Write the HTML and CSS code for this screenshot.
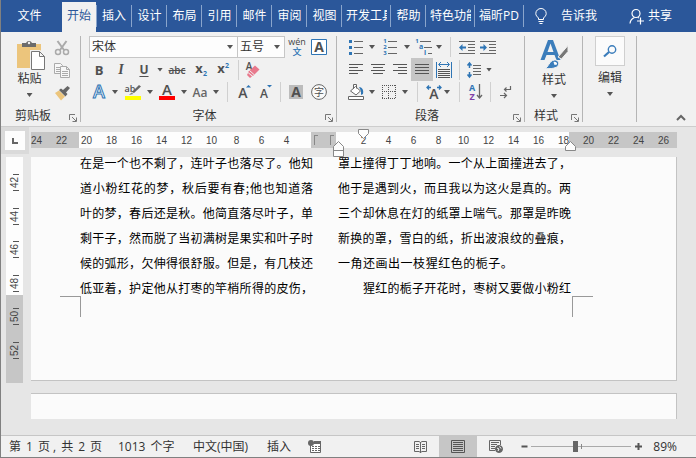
FILE: index.html
```html
<!DOCTYPE html>
<html lang="zh-CN">
<head>
<meta charset="utf-8">
<title>文档</title>
<link rel="stylesheet" href="styles.css">
</head>
<body>
<div class="window">
  <nav class="tabs">
    <a class="tab file" href="#">文件</a>
    <a class="tab active" href="#">开始</a>
    <a class="tab" href="#">插入</a>
    <a class="tab" href="#">设计</a>
    <a class="tab" href="#">布局</a>
    <a class="tab" href="#">引用</a>
    <a class="tab" href="#">邮件</a>
    <a class="tab" href="#">审阅</a>
    <a class="tab" href="#">视图</a>
    <a class="tab wide" href="#"><span>开发工具</span></a>
    <a class="tab" href="#">帮助</a>
    <a class="tab wide" href="#"><span>特色功能</span></a>
    <a class="tab wide" href="#"><span>福昕PD</span></a>
    <a class="tell" href="#">
      <svg width="12" height="17" viewBox="0 0 12 17" fill="none" stroke="#fff"><path d="M3.500 11.500V10C2 8.500 .8 7.500 .8 5.500a5.200 5 0 0 1 10.400 0c0 2-1.200 3-2.700 4.500v1.500zM3.500 13.500h5M4.500 15.500h3"/></svg>
      告诉我</a>
    <a class="share" href="#">
      <svg width="16" height="17" viewBox="0 0 16 17" fill="none" stroke="#fff" stroke-width="1.200"><circle cx="7" cy="5.500" r="4"/><path d="M1 15.500c.3-3.500 2-5 4.500-6M9 9.500l1 .5M11.500 9.500v7M8 13h7"/></svg>
      共享</a>
  </nav>

  <div class="ribbon">
    <section class="group clipboard">
      <div class="paste-area">
        <button class="big" aria-label="粘贴">
          <svg width="30" height="31" viewBox="0 0 30 31"><path fill="#ecc57c" d="M2 4h24v24H2z"/><path fill="#6b6b6b" d="M7 3h4a3.200 3.200 0 0 1 6 0h4v4H7z"/><circle cx="14" cy="3" r="1.200" fill="#f1f1f1"/><path fill="#fff" stroke="#f1f1f1" stroke-width="3" d="M16.500 11.500h8l5 5V29h-13z"/><path fill="#fff" stroke="#777" d="M16.500 11.500h8l5 5V29.500h-13zM24.500 11.500v5h5"/></svg>
          <span>粘贴</span><i class="caret"></i>
        </button>
        <div class="stack">
          <button aria-label="剪切"><svg width="16" height="16" viewBox="0 0 16 16" fill="none" stroke="#aaa" stroke-width="1.500"><path stroke-width="2" d="M3.500 1l6.500 9M12.500 1L6 10"/><circle cx="4" cy="12" r="2.500"/><circle cx="12" cy="12" r="2.500"/></svg></button>
          <button aria-label="复制"><svg width="16" height="15" viewBox="0 0 16 15" fill="#f7f7f7" stroke="#aaa"><path d="M.5.5h6l2 2v8h-8zM2 4.500h4M2 6.500h4M2 8.500h4"/><path d="M6.500 3.500h6l3 3v8h-9zM12.500 3.500v3h3M8 8.500h6M8 10.500h6M8 12.500h6"/></svg></button>
          <button aria-label="格式刷"><svg width="16" height="15" viewBox="0 0 16 15"><path fill="#ecc57c" d="M1 7l4-2.500 6 6L7 14.500z"/><path fill="#666" d="M5 4l2-1.500 2 1.500 4.500-4L16 2l-4 4.500 1.500 1.500-2 2.500z"/></svg></button>
        </div>
      </div>
      <div class="caption"><span>剪贴板</span><button class="launch" aria-label="剪贴板选项"><svg width="8" height="8" viewBox="0 0 8 8" fill="none" stroke="#777"><path d="M.5 6V.5H6M3 3l4 4M7.500 3.500v4h-4"/></svg></button></div>
    </section>

    <section class="group font">
      <div class="row combos">
        <label class="combo name"><select aria-label="字体"><option>宋体</option></select><i class="caret"></i></label>
        <label class="combo size"><select aria-label="字号"><option>五号</option></select><i class="caret"></i></label>
        <button class="w24 pinyin" aria-label="拼音指南"><span>wén</span><b>文</b></button>
        <button class="w20" aria-label="字符边框"><svg width="16" height="16" viewBox="0 0 16 16"><path fill="#fff" stroke="#2e75b5" d="M.5.5h15v15H.5z"/><text x="8" y="13" class="glyph" font-size="14">A</text></svg></button>
      </div>
      <div class="row">
        <button class="w22 bold">B</button><button class="w22 italic">I</button><button class="w24 under">U</button><i class="caret c8"></i>
        <button class="w26 strike">abc</button>
        <button class="w22" aria-label="下标"><svg width="16" height="16" viewBox="0 0 16 16"><text x="6" y="11" class="glyph" font-size="13">x</text><text x="12" y="14" class="glyph blue" font-size="7">2</text></svg></button>
        <button class="w22" aria-label="上标"><svg width="16" height="16" viewBox="0 0 16 16"><text x="6" y="11" class="glyph" font-size="13">x</text><text x="12" y="6" class="glyph blue" font-size="7">2</text></svg></button>
        <i class="sep s8"></i>
        <button class="w22" aria-label="清除格式"><svg width="16" height="16" viewBox="0 0 16 16"><text x="4" y="8" class="glyph thin" font-size="10">A</text><path fill="#e8788c" d="M10 3.500l4.500 4L8 14l-5-4z"/><path stroke="#f1f1f1" d="M4.500 8.500l5 4.500"/><path fill="#e8788c" d="M3 11l4 3.500-2 1.500-3-3z"/></svg></button>
      </div>
      <div class="row">
        <button class="w22" aria-label="文本效果"><svg width="16" height="16" viewBox="0 0 16 16"><text x="8" y="14" class="glyph effect" font-size="18">A</text></svg></button><i class="caret c10"></i>
        <button class="w26" aria-label="突出显示"><svg width="16" height="16" viewBox="0 0 16 16"><text x="5" y="8" class="glyph thin" font-size="9">ab</text><path fill="#666" d="M14 1l2 1.500L9 9 7 8z"/><path fill="#888" d="M6.500 8.500L8.500 10 4 11z"/><path fill="#ff0" d="M0 12h16v4H0z"/></svg></button><i class="caret c8"></i>
        <button class="w26" aria-label="字体颜色"><svg width="16" height="16" viewBox="0 0 16 16"><text x="8" y="11" class="glyph thin" font-size="15">A</text><path fill="red" d="M0 12h16v4H0z"/></svg></button><i class="caret c8"></i>
        <button class="w24 case">Aa</button><i class="caret c8"></i>
        <i class="sep s14"></i>
        <button class="w22" aria-label="增大字号"><svg width="16" height="16" viewBox="0 0 16 16"><text x="6" y="14" class="glyph thin" font-size="14">A</text><path fill="#2e75b5" d="M9 3.500L11.500 1 14 3.500z"/></svg></button>
        <button class="w20" aria-label="减小字号"><svg width="16" height="16" viewBox="0 0 16 16"><text x="6" y="14" class="glyph thin" font-size="12">A</text><path fill="#2e75b5" d="M9 1h5l-2.500 2.500z"/></svg></button>
        <i class="sep s8"></i>
        <button class="w24" aria-label="字符底纹"><svg width="14" height="14" viewBox="0 0 14 14"><path fill="#bcbcbc" d="M0 0h14v14H0z"/><text x="7" y="12" class="glyph" font-size="14">A</text></svg></button>
        <button class="w22" aria-label="带圈字符"><svg width="16" height="16" viewBox="0 0 16 16"><circle cx="8" cy="8" r="7.400" fill="#fafafa" stroke="#666"/><text x="8" y="12" class="glyph ring" font-size="10">字</text></svg></button>
      </div>
      <div class="caption"><span>字体</span><button class="launch" aria-label="字体选项"><svg width="8" height="8" viewBox="0 0 8 8" fill="none" stroke="#777"><path d="M.5 6V.5H6M3 3l4 4M7.500 3.500v4h-4"/></svg></button></div>
    </section>

    <section class="group para">
      <div class="row">
        <button class="w22" aria-label="项目符号"><svg width="14" height="16" viewBox="0 0 14 16"><path stroke="#666" d="M5 2.500h9M5 8.500h9M5 14.500h9"/><path fill="#2e75b5" d="M0 1h3v3H0zM0 7h3v3H0zM0 13h3v3H0z"/></svg></button><i class="caret c10"></i>
        <button class="w26" aria-label="编号"><svg width="14" height="16" viewBox="0 0 14 16"><path stroke="#666" d="M5 2.500h9M5 8.500h9M5 14.500h9"/><text x="2" y="4" class="glyph blue" font-size="6">1</text><text x="2" y="10" class="glyph blue" font-size="6">2</text><text x="2" y="16" class="glyph blue" font-size="6">3</text></svg></button><i class="caret c8"></i>
        <button class="w24" aria-label="多级列表"><svg width="17" height="16" viewBox="0 0 17 16"><path stroke="#666" d="M5 2.500h11M9 8.500h8M13 14.500h4"/><text x="2" y="4" class="glyph blue" font-size="6">1</text><text x="6" y="10" class="glyph blue" font-size="7">a</text><text x="10" y="16" class="glyph blue" font-size="7">i</text></svg></button><i class="caret c8"></i>
        <i class="sep s14"></i>
        <button class="w20" aria-label="减少缩进"><svg width="16" height="13" viewBox="0 0 16 13"><path stroke="#666" d="M0 .5h16M9 3.500h7M9 6.500h7M9 9.500h7M0 12.500h16"/><path fill="#2e75b5" d="M0 6.500L3.500 3v2.500H7v2H3.500V10z"/></svg></button>
        <button class="w22" aria-label="增加缩进"><svg width="16" height="13" viewBox="0 0 16 13"><path stroke="#666" d="M0 .5h16M9 3.500h7M9 6.500h7M9 9.500h7M0 12.500h16"/><path fill="#2e75b5" d="M7 6.500L3.500 3v2.500H0v2h3.500V10z"/></svg></button>
      </div>
      <div class="row">
        <button class="w22" aria-label="左对齐"><svg width="14" height="11" viewBox="0 0 14 11" stroke="#555"><path d="M0 .5h14M0 3.500h9M0 6.500h14M0 9.500h9"/></svg></button>
        <button class="w22" aria-label="居中"><svg width="14" height="11" viewBox="0 0 14 11" stroke="#555"><path d="M0 .5h14M2 3.500h10M0 6.500h14M2 9.500h10"/></svg></button>
        <button class="w22" aria-label="右对齐"><svg width="14" height="11" viewBox="0 0 14 11" stroke="#555"><path d="M0 .5h14M5 3.500h9M0 6.500h14M5 9.500h9"/></svg></button>
        <button class="w22 pressed" aria-label="两端对齐" aria-pressed="true"><svg width="14" height="11" viewBox="0 0 14 11" stroke="#555"><path d="M0 .5h14M0 3.500h14M0 6.500h14M0 9.500h14"/></svg></button>
        <button class="w22" aria-label="分散对齐"><svg width="16" height="16" viewBox="0 0 16 16"><path stroke="#2e75b5" d="M.5 0v16M15.500 0v16M3 2.500h10"/><path fill="none" stroke="#2e75b5" d="M5 0L2.500 2.500 5 5M11 0l2.500 2.500L11 5"/><path stroke="#555" d="M2 7.500h12M2 9.500h12M2 11.500h12M2 13.500h12M2 15.500h12"/></svg></button>
        <i class="sep s8"></i>
        <button class="w22" aria-label="行距"><svg width="14" height="16" viewBox="0 0 14 16"><path stroke="#666" d="M6 3.500h8M6 6.500h8M6 9.500h8M6 12.500h8"/><path stroke="#2e75b5" fill="none" stroke-width="1.500" d="M2.500 1v5M.5 3.500l2-2.500 2 2.500M2.500 10v5M.5 12.500l2 2.500 2-2.500"/></svg></button><i class="caret c8"></i>
      </div>
      <div class="row">
        <button class="w22" aria-label="底纹"><svg width="16" height="16" viewBox="0 0 16 16"><path fill="#fff" stroke="#666" d="M2.500 7l5-4.500 5 4.500-4.500 4zM5.500 5V.5h3v4M.5 12.500h15v3H.5z"/><path fill="#2e75b5" d="M11 3c3 0 5 3 4 7l-2 1V7z"/></svg></button><i class="caret c10"></i>
        <button class="w24" aria-label="边框"><svg width="14" height="14" viewBox="0 0 14 14" fill="none" stroke="#555" stroke-dasharray="1 1"><path d="M.5 0v13M13.500 0v13M6.500 0v13M0 .5h14M0 6.500h14M0 13.500h14"/></svg></button><i class="caret c8"></i>
        <i class="sep s16"></i>
        <button class="w18" aria-label="中文版式"><svg width="16" height="16" viewBox="0 0 16 16"><text x="8" y="15" class="glyph thin" font-size="14">A</text><path stroke="#2e75b5" fill="none" stroke-width="1.300" d="M5 3.500H1M3 1.500l-2 2 2 2M11 3.500h4M13 1.500l2 2-2 2"/></svg></button><i class="caret c8"></i>
        <i class="sep s16"></i>
        <button class="w18" aria-label="排序"><svg width="14" height="16" viewBox="0 0 14 16"><text x="3" y="7" class="glyph blue" font-size="9">A</text><text x="3" y="16" class="glyph purple" font-size="9">Z</text><path stroke="#666" fill="none" stroke-width="1.300" d="M10.500 0v14M8 11l2.500 3 2.500-3"/></svg></button>
        <i class="sep s10"></i>
        <button class="w22" aria-label="显示编辑标记"><svg width="12" height="14" viewBox="0 0 12 14" fill="none" stroke="#666" stroke-width="1.200"><path d="M10.500 1v3.500h-6M6.500 2.500l-2 2 2 2M0 10.500h6M4 8l2.500 2.500L4 13"/></svg></button>
      </div>
      <div class="caption"><span>段落</span><button class="launch" aria-label="段落选项"><svg width="8" height="8" viewBox="0 0 8 8" fill="none" stroke="#777"><path d="M.5 6V.5H6M3 3l4 4M7.500 3.500v4h-4"/></svg></button></div>
    </section>

    <section class="group styles">
      <button class="big" aria-label="样式">
        <svg width="28" height="30" viewBox="0 0 28 30"><path fill="#3b7dbb" fill-rule="evenodd" d="M8 1h5l7.500 20h-4L14.500 16H6.500L4.500 21H.5zM7.500 13h6L10.500 4.500z"/><path fill="#777" stroke="#f1f1f1" d="M28 6.500v6L21.500 20l-3.500-2z"/><path fill="#3b7dbb" stroke="#f1f1f1" d="M4.500 29.500c4-.5 4.500-8 10-8.500 3-.2 5 2.500 4 5-1.500 3.500-8 4-14 3.500z"/><path fill="#fff" d="M13.500 23c2-.6 4 1 3.500 2.500l-2.500.5z"/></svg>
        <span>样式</span><i class="caret"></i>
      </button>
      <div class="caption"><span>样式</span><button class="launch" aria-label="样式选项"><svg width="8" height="8" viewBox="0 0 8 8" fill="none" stroke="#777"><path d="M.5 6V.5H6M3 3l4 4M7.500 3.500v4h-4"/></svg></button></div>
    </section>

    <section class="group edit">
      <button class="big" aria-label="编辑">
        <span class="frame"><svg width="14" height="13" viewBox="0 0 14 13" fill="none" stroke="#3b7dbb"><circle cx="9" cy="4.500" r="3.700" stroke-width="1.400"/><path stroke-width="2.200" d="M6 7l-5 4.500"/></svg></span>
        <span>编辑</span><i class="caret"></i>
      </button>
    </section>
    <button class="collapse" aria-label="折叠功能区"><svg width="10" height="7" viewBox="0 0 10 7" fill="none" stroke="#666" stroke-width="2"><path d="M1 6l4-4 4 4"/></svg></button>
  </div>

  <div class="workspace">
    <div class="corner"><button aria-label="制表符"><svg width="6" height="6" viewBox="0 0 6 6" fill="none" stroke="#666" stroke-width="2"><path d="M1 0v5h5"/></svg></button></div>
    <div class="hruler">
      <ol>
        <li>24</li><li>22</li><li>20</li><li>18</li><li>16</li><li>14</li><li>12</li><li>10</li><li>8</li><li>6</li><li>4</li>
        <li class="gutter"><i></i><i></i></li>
        <li>2</li><li>4</li><li>6</li><li>8</li><li>10</li><li>12</li><li>14</li><li>16</li><li>18</li><li>20</li><li>22</li><li>24</li><li>26</li>
      </ol>
      <svg class="marker first" width="11" height="10" viewBox="0 0 11 10"><path d="M.5.5h10v4l-5 5-5-5z"/></svg>
      <svg class="marker hanging" width="11" height="16" viewBox="0 0 11 16"><path d="M.5 15.500v-10l5-5 5 5v10zM.5 9.500h10"/></svg>
      <svg class="marker right" width="11" height="10" viewBox="0 0 11 10"><path d="M.5 9.500v-4l5-5 5 5v4z"/></svg>
    </div>
    <div class="vruler">
      <ol><li>42</li><li>44</li><li>46</li><li>48</li><li>50</li><li>52</li></ol>
    </div>
    <main class="pages">
      <article class="page">
        <div class="columns">
          <div class="column">
            <p>在是一个也不剩了，连叶子也落尽了。他知</p>
            <p>道小粉红花的梦，秋后要有春;他也知道落</p>
            <p>叶的梦，春后还是秋。他简直落尽叶子，单</p>
            <p>剩干子，然而脱了当初满树是果实和叶子时</p>
            <p>候的弧形，欠伸得很舒服。但是，有几枝还</p>
            <p>低亚着，护定他从打枣的竿梢所得的皮伤，</p>
          </div>
          <div class="column">
            <p>罩上撞得丁丁地响。一个从上面撞进去了，</p>
            <p>他于是遇到火，而且我以为这火是真的。两</p>
            <p>三个却休息在灯的纸罩上喘气。那罩是昨晚</p>
            <p>新换的罩，雪白的纸，折出波浪纹的叠痕，</p>
            <p class="last">一角还画出一枝猩红色的栀子。</p>
            <p class="indent">猩红的栀子开花时，枣树又要做小粉红</p>
          </div>
        </div>
        <i class="crop left"></i><i class="crop right"></i>
      </article>
      <article class="page next"></article>
    </main>
  </div>

  <footer class="status">
    <span class="pageno"><span>第</span><span>1</span><span>页 ,</span><span>共</span><span>2</span><span>页</span></span><span class="words"><span>1013</span><span>个字</span></span><span class="lang">中文(中国)</span><span class="mode">插入</span>
    <button class="macro" aria-label="录制宏"><svg width="13" height="13" viewBox="0 0 13 13"><path fill="#fff" stroke="#666" d="M2.500 2.500h10v10h-10z"/><path fill="#666" d="M6 1h7v3H6z"/><path stroke="#666" stroke-dasharray="2 1" d="M4 6.500h8M4 8.500h8M4 10.500h8"/><circle cx="3" cy="3" r="3" fill="#666"/></svg></button>
    <span class="grow"></span>
    <button class="view" aria-label="阅读视图"><svg width="13" height="12" viewBox="0 0 13 12" fill="none" stroke="#666"><path d="M.5.500h4.500l1.500 1 1.500-1h4.500v10H8l-1.500 1-1.500-1H.5zM6.500 1v11M2 3.500h3M2 5.500h3M2 7.500h3M8 3.500h3M8 5.500h3M8 7.500h3"/></svg></button>
    <button class="view on" aria-label="页面视图"><svg width="14" height="13" viewBox="0 0 14 13" fill="none" stroke="#555"><path d="M.5.5h13v12H.5zM2 2.500h10M2 4.500h10M2 6.500h10M2 8.500h10M2 10.500h10"/></svg></button>
    <button class="view" aria-label="Web 版式"><svg width="14" height="13" viewBox="0 0 14 13" fill="none" stroke="#666"><path d="M6 10.500H.5V.5h11V5M2 2.500h8M2 4.500h6M2 6.500h4M2 8.500h4"/><circle cx="10" cy="9" r="3.500" fill="#666"/><path stroke="#fff" d="M8 8l2 1-1 2M10.500 6.500l1.500 2"/></svg></button>
    <button class="zoom" aria-label="缩小"><svg width="9" height="9" viewBox="0 0 9 9" stroke="#555" stroke-width="2"><path d="M1.500 4.500h6"/></svg></button>
    <input class="slider" type="range" min="0" max="100" value="44" aria-label="缩放">
    <button class="zoom plus" aria-label="放大"><svg width="9" height="9" viewBox="0 0 9 9" stroke="#555" stroke-width="2"><path d="M1 4.500h7M4.500 1v7"/></svg></button>
    <span class="percent">89%</span>
  </footer>
</div>
</body>
</html>
```
FILE: styles.css
```css
* { box-sizing: border-box; }
body { margin: 0; font: 12px/16px "Open Sans", "Noto Sans CJK SC", sans-serif; color: #333; }
button { padding: 0; border: 0; background: none; color: inherit; font: inherit; }
button, a { display: flex; align-items: center; justify-content: center; }
a { color: inherit; text-decoration: none; }
svg { display: block; flex: none; overflow: visible; }
ol { list-style: none; margin: 0; padding: 0; }

.window { display: flex; flex-direction: column; height: 100vh; border-left: 1px solid #808080; border-bottom: 1px solid #808080; background: #e6e6e6; overflow: hidden; }

/* Tabs */
.tabs { display: flex; height: 32px; flex: none; background: #2b579a; color: #fff; white-space: nowrap; }
.tab { position: relative; width: 35px; flex: none; }
.tab::after { content: ""; position: absolute; right: 0; top: 5px; width: 1px; height: 22px; background: #8aa5cc; }
.tab.file { width: 61px; padding-right: 4px; }
.tab.file::after { display: none; }
.tab.active { width: 34px; margin-top: 2px; padding-bottom: 2px; background: #f1f1f1; color: #2b579a; }
.tab.active::after { top: 3px; right: -1px; }
.tab.active + .tab { width: 36px; }
.tab.wide { width: 49px; justify-content: flex-start; padding: 0 4px; }
.tab.wide span { overflow: hidden; width: 41px; }
.tell { gap: 14px; padding-left: 11px; }
.share { gap: 3px; margin-left: auto; padding-right: 24px; }

/* Ribbon */
.ribbon { display: flex; flex: none; height: 95px; padding-top: 4px; background: #f1f1f1; border-bottom: 1px solid #cdcdcd; }
.group { position: relative; display: flex; flex-direction: column; flex: none; }
.group::after { content: ""; position: absolute; right: 0; top: 0; width: 1px; height: 86px; background: #b5b5b5; }
.clipboard { width: 80px; }
.font { width: 256px; padding-left: 7px; }
.para { width: 188px; padding-left: 8px; }
.styles { width: 58px; }
.edit { width: 54px; }
.row { display: flex; height: 22px; flex: none; align-items: center; }
.row:nth-child(2) { height: 23px; }
.row.combos { padding-left: 1px; }
.row button { height: 100%; flex: none; }
.w18 { width: 18px; } .w20 { width: 20px; } .w22 { width: 22px; } .w24 { width: 24px; } .w26 { width: 26px; }
.caption { position: relative; display: flex; justify-content: center; margin-top: auto; padding-bottom: 1px; line-height: 18px; color: #333; }
.font .caption, .para .caption { margin-right: 16px; }
.clipboard .caption { padding-right: 16px; }
.styles .caption { padding-right: 16px; }
.launch { position: absolute; right: 4px; bottom: 4px; }
.font .launch, .para .launch { right: -12px; }
.caret { width: 6px; height: 4px; flex: none; background: #555; clip-path: polygon(0 0, 100% 0, 50% 100%); }
.caret.c8 { margin: 0 1px; }
.caret.c10 { margin: 0 2px; }
.sep { flex: none; height: 20px; background: linear-gradient(#d0d0d0, #d0d0d0) center / 1px 100% no-repeat; }
.s8 { width: 8px; } .s10 { width: 10px; } .s14 { width: 14px; } .s16 { width: 16px; }

.paste-area { display: flex; }
.big { flex-direction: column; justify-content: flex-start; }
.paste-area .big { width: 50px; padding: 4px 0 0 7px; }
.big span { line-height: 18px; color: #333; }
.big .caret { margin-top: 5px; }
.paste-area .big span { margin-top: -1px; }
.stack { display: flex; flex-direction: column; }
.stack button { width: 22px; height: 23px; }
.styles .big { padding: 3px 0 0; }
.styles .big span { margin-top: 2px; }
.edit .frame { display: flex; align-items: center; justify-content: center; width: 30px; height: 30px; margin-bottom: 3px; border: 1px solid #cfcfcf; background: #fbfbfb; }
.collapse { align-self: flex-end; margin: 0 10px 5px auto; }

.combo { position: relative; display: flex; align-items: center; height: 22px; border: 1px solid #c6c6c6; background: #fdfdfd; }
.combo.name { width: 149px; }
.combo.size { width: 48px; margin-left: -1px; }
.combo select { width: 100%; height: 100%; padding: 0 2px; border: 0; background: none; appearance: none; font: inherit; color: #333; }
.combo .caret { position: absolute; right: 4px; }
.pinyin { flex-direction: column; line-height: 10px; font-size: 9px; color: #444; }
.pinyin b { font-weight: 500; color: #2e75b5; }
.glyph { font-family: "Open Sans", "Noto Sans CJK SC", sans-serif; font-weight: 700; text-anchor: middle; fill: #505050; }
.glyph.thin { font-weight: 600; }
.glyph.ring { font-weight: 400; }
.glyph.blue { fill: #2e75b5; }
.glyph.purple { fill: #8040a8; }
.glyph.effect { fill: #fff; stroke: #2e75b5; stroke-width: 1px; font-weight: 600; }
.bold { font: 700 13px "Open Sans", sans-serif; color: #505050; }
.italic { font: italic 700 14px "Liberation Serif", serif; color: #505050; }
.under { font: 700 12px "Open Sans", sans-serif; text-decoration: underline; text-underline-offset: 2px; color: #505050; }
.strike { font: 600 10px "Open Sans", sans-serif; text-decoration: line-through; color: #505050; }
.case { font: 600 12px "Open Sans", sans-serif; color: #666; }
.pressed { background: #c6c6c6; }

/* Rulers and pages */
.workspace { display: grid; grid-template-columns: 30px 1fr; grid-template-rows: 30px 1fr; flex: 1; min-height: 0; }
.corner { width: 28px; height: 27px; padding: 4px; background: #dadada; }
.corner button { width: 20px; height: 19px; background: #fdfdfd; }
.hruler { position: relative; height: 16px; margin: 5px 19px 0 0; background: linear-gradient(90deg, #c6c6c6 48px, #fdfdfd 48px 280px, #c6c6c6 280px 305px, #fdfdfd 305px 538px, #c6c6c6 538px); }
.hruler ol { display: flex; margin-left: -7px; }
.hruler li { width: 25px; flex: none; text-align: center; font: 10px/17px "Liberation Sans", sans-serif; color: #444; }
.hruler .gutter { display: flex; gap: 12px; width: 52px; padding: 3px 0 0 15px; }
.gutter i { width: 4px; height: 10px; border: solid #888; border-width: 1px 0 0 1px; }
.marker { position: absolute; z-index: 1; fill: #fdfdfd; stroke: #888; }
.marker.first { left: 327px; top: -3px; }
.marker.hanging { left: 302px; top: 9px; }
.marker.right { left: 534px; top: 9px; }
.vruler { width: 17px; height: 226px; margin-left: 5px; background: linear-gradient(#fdfdfd 138px, #c6c6c6 138px); }
.vruler ol { display: flex; flex-direction: column; justify-content: space-between; height: 100%; padding: 17px 0 24px; }
.vruler li { position: relative; display: flex; align-items: center; justify-content: center; height: 17px; writing-mode: vertical-rl; transform: rotate(180deg); font: 10px/17px "Liberation Sans", sans-serif; color: #444; }
.vruler li::before, .vruler li::after { content: ""; position: absolute; left: 4px; width: 6px; height: 1px; background: #555; }
.vruler li::before { top: 0; }
.vruler li::after { bottom: 0; }
.pages { margin-right: 19px; }
.page { position: relative; height: 224px; overflow: hidden; background: #fbfbfb; border: solid #c3c3c3; border-width: 0 1px 1px 0; }
.page.next { height: 26px; margin-top: 12px; border-width: 1px 1px 0 0; }
.columns { display: grid; grid-template-columns: 233px 233px; gap: 25px; margin: -7px 0 0 49px; }
.column p { margin: 0; font: 12px/25px "Noto Sans CJK SC", sans-serif; color: #000; white-space: nowrap; text-align: justify; text-align-last: justify; text-justify: inter-character; }
.column .last { width: 75%; }
.column .indent { padding-left: 25px; }
.crop { position: absolute; top: 139px; width: 21px; height: 21px; border: 0 solid #999; border-top-width: 1px; }
.crop.left { left: 29px; border-right-width: 1px; }
.crop.right { left: 541px; border-left-width: 1px; }

/* Status bar */
.status { display: flex; align-items: center; flex: none; height: 22px; padding: 0 19px 0 8px; background: #f1f1f1; border-top: 1px solid #c6c6c6; white-space: nowrap; color: #333; }
.pageno, .words { display: flex; gap: 5px; }
.pageno { width: 109px; }
.words { width: 75px; }
.lang { width: 74px; }
.mode { width: 41px; }
.grow { flex: 1; }
.view { width: 38px; height: 100%; }
.view.on { background: #c6c6c6; }
.zoom { width: 14px; margin-left: 2px; }
.zoom.plus { margin-left: 0; }
.slider { width: 100px; height: 12px; margin: 0; appearance: none; background: linear-gradient(#888, #888) 50px center / 1px 5px no-repeat, linear-gradient(#aaa, #aaa) center / 100% 1px no-repeat; }
.slider::-webkit-slider-thumb { appearance: none; width: 5px; height: 11px; background: #666; }
.percent { width: 32px; text-align: right; }
```
